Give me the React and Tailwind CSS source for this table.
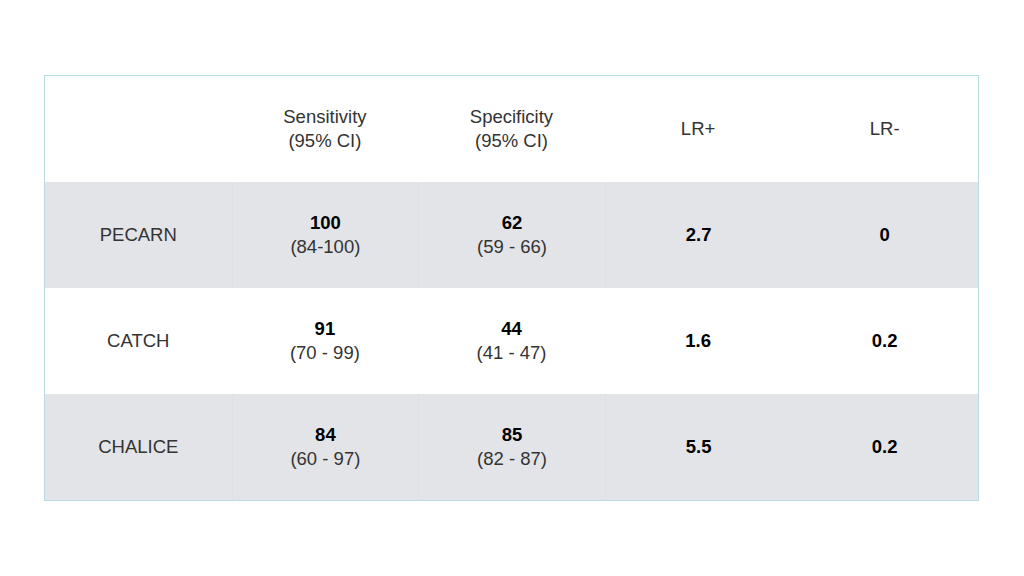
const rows = [
  { name: "PECARN", sens: "100", sensCi: "(84-100)", spec: "62", specCi: "(59 - 66)", lrp: "2.7", lrn: "0", shaded: true },
  { name: "CATCH", sens: "91", sensCi: "(70 - 99)", spec: "44", specCi: "(41 - 47)", lrp: "1.6", lrn: "0.2", shaded: false },
  { name: "CHALICE", sens: "84", sensCi: "(60 - 97)", spec: "85", specCi: "(82 - 87)", lrp: "5.5", lrn: "0.2", shaded: true },
];

function Cell({ children, divider, className = "" }) {
  return (
    <div
      className={
        "flex flex-col items-center justify-center text-center " +
        (divider ? "border-l border-[#dfe0e4] " : "") +
        className
      }
    >
      {children}
    </div>
  );
}

export default function App() {
  return (
    <div
      className="w-[1024px] h-[576px] bg-white pt-[75px] pl-[44px]"
      style={{ fontFamily: '"Liberation Sans", Arial, sans-serif' }}
    >
      <div className="w-[935px] border border-[#b9dbe4] text-[18.5px] leading-[24px] text-[#333333]">

        {/* HEADER */}
        <div className="grid grid-cols-5 h-[106px] bg-white">
          <Cell />
          <Cell>
            <span>Sensitivity</span>
            <span>(95% CI)</span>
          </Cell>
          <Cell>
            <span>Specificity</span>
            <span>(95% CI)</span>
          </Cell>
          <Cell>LR+</Cell>
          <Cell>LR-</Cell>
        </div>

        {/* ROWS */}
        {rows.map((r) => (
          <div
            key={r.name}
            className={
              "grid grid-cols-5 h-[106px] " +
              (r.shaded ? "bg-[#e3e4e8]" : "bg-white")
            }
          >
            <Cell>{r.name}</Cell>
            <Cell divider={r.shaded}>
              <span className="font-bold text-black">{r.sens}</span>
              <span>{r.sensCi}</span>
            </Cell>
            <Cell divider={r.shaded}>
              <span className="font-bold text-black">{r.spec}</span>
              <span>{r.specCi}</span>
            </Cell>
            <Cell divider={r.shaded}>
              <span className="font-bold text-black">{r.lrp}</span>
            </Cell>
            <Cell>
              <span className="font-bold text-black">{r.lrn}</span>
            </Cell>
          </div>
        ))}

      </div>
    </div>
  );
}
